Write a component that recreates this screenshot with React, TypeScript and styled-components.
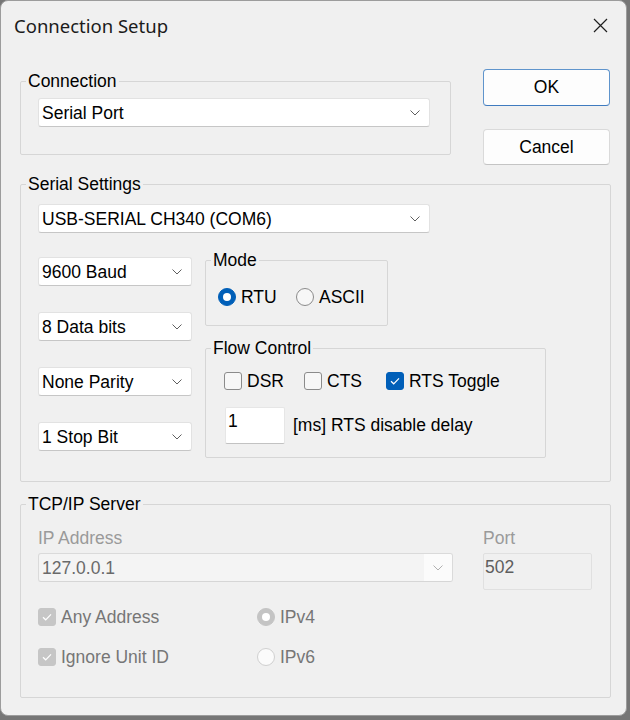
import React from "react";
import styled, { createGlobalStyle } from "styled-components";

const GlobalStyle = createGlobalStyle`
  html, body {
    margin: 0;
    padding: 0;
    background: #767676;
  }
  body {
    font-family: "Liberation Sans", Arial, sans-serif;
    font-size: 17.5px;
    color: #000;
  }
  * {
    box-sizing: border-box;
  }
`;

const Window = styled.div`
  width: 627px;
  height: 716px;
  background: #f0f0f0;
  border: 1px solid #9c9c9c;
  border-radius: 8px;
  overflow: hidden;
  display: flex;
  flex-direction: column;
`;

const TitleBar = styled.div`
  height: 49px;
  flex: none;
  display: flex;
  align-items: center;
  justify-content: space-between;
  padding: 0 18px 0 13px;
`;

const Title = styled.div`
  font-family: "Noto Sans", "Segoe UI", sans-serif;
  font-size: 18.5px;
  color: #1b1b1b;
`;

const CloseIcon = styled.svg`
  display: block;
`;

const Content = styled.div`
  padding: 21px 15px 0 19px;
  display: flex;
  flex-direction: column;
`;

const TopRow = styled.div`
  display: grid;
  grid-template-columns: 431px 127px;
  column-gap: 32px;
  align-items: start;
`;

const Group = styled.fieldset<{ $width?: number; $mt?: number }>`
  margin: ${p => p.$mt ?? 0}px 0 0 0;
  padding: 0;
  min-width: 0;
  border: 1px solid #d6d6d6;
  border-radius: 2px;
  ${p => (p.$width ? `width: ${p.$width}px;` : "")}
`;

const Legend = styled.legend`
  margin-left: 5px;
  padding: 0 2px;
  font-size: 17.5px;
  line-height: 20px;
`;

const GroupBody = styled.div<{ $pad: string }>`
  padding: ${p => p.$pad};
`;

const ButtonColumn = styled.div`
  display: flex;
  flex-direction: column;
  gap: 23px;
  margin-top: -2px;
`;

const DialogButton = styled.button<{ $default?: boolean }>`
  height: ${p => (p.$default ? 37 : 36)}px;
  width: 100%;
  font-family: "Liberation Sans", Arial, sans-serif;
  font-size: 17.5px;
  color: #000;
  background: #fdfdfd;
  border: 1px solid ${p => (p.$default ? "#5f94cc" : "#dadada")};
  border-bottom-color: ${p => (p.$default ? "#3f7bbf" : "#c4c4c4")};
  border-radius: 4px;
  padding: 0;
`;

const ComboBox = styled.div<{ $width: number; $disabled?: boolean }>`
  width: ${p => p.$width}px;
  height: 29px;
  flex: none;
  display: flex;
  align-items: center;
  overflow: hidden;
  background: ${p => (p.$disabled ? "#f4f4f4" : "#fff")};
  border: 1px solid ${p => (p.$disabled ? "#dadada" : "#e2e2e2")};
  border-bottom-color: ${p => (p.$disabled ? "#d6d6d6" : "#c6c6c6")};
  border-radius: 3px;
  color: ${p => (p.$disabled ? "#6a6a6a" : "#000")};
`;

const ComboText = styled.span`
  flex: 1;
  padding-left: 3px;
  line-height: 20px;
  white-space: nowrap;
`;

const ComboArrow = styled.span<{ $disabled?: boolean }>`
  width: 28px;
  align-self: stretch;
  display: flex;
  align-items: center;
  justify-content: center;
  background: ${p => (p.$disabled ? "#fbfbfb" : "transparent")};
`;

const SerialRow = styled.div`
  margin-top: 17px;
  display: grid;
  grid-template-columns: 154px 341px;
  column-gap: 13px;
  align-items: start;
`;

const ComboColumn = styled.div`
  padding-top: 7px;
  display: flex;
  flex-direction: column;
  gap: 26px;
`;

const GroupColumn = styled.div`
  display: flex;
  flex-direction: column;
  gap: 12px;
`;

const OptionRow = styled.div<{ $cols: string }>`
  display: grid;
  grid-template-columns: ${p => p.$cols};
  align-items: center;
`;

const Option = styled.label<{ $disabled?: boolean }>`
  display: inline-flex;
  align-items: center;
  gap: 5px;
  height: 20px;
  line-height: 20px;
  white-space: nowrap;
  color: ${p => (p.$disabled ? "#767676" : "#000")};
`;

const RadioCircle = styled.span<{ $checked?: boolean; $disabled?: boolean }>`
  width: 18px;
  height: 18px;
  flex: none;
  border-radius: 50%;
  display: flex;
  align-items: center;
  justify-content: center;
  background: ${p =>
    p.$checked ? (p.$disabled ? "#c4c4c4" : "#005fb8") : p.$disabled ? "#fbfbfb" : "#f7f7f7"};
  border: 1px solid
    ${p =>
      p.$checked ? (p.$disabled ? "#c4c4c4" : "#005fb8") : p.$disabled ? "#d0d0d0" : "#8b8b8b"};

  &::after {
    content: "";
    display: ${p => (p.$checked ? "block" : "none")};
    width: 8px;
    height: 8px;
    border-radius: 50%;
    background: #fff;
  }
`;

const CheckBox = styled.span<{ $checked?: boolean; $disabled?: boolean }>`
  width: 18px;
  height: 18px;
  flex: none;
  border-radius: 3px;
  display: flex;
  align-items: center;
  justify-content: center;
  background: ${p =>
    p.$checked ? (p.$disabled ? "#c6c6c6" : "#005fb8") : "#f7f7f7"};
  border: 1px solid
    ${p => (p.$checked ? (p.$disabled ? "#c6c6c6" : "#005fb8") : "#8b8b8b")};
`;

const DelayRow = styled.div`
  margin-top: 16px;
  display: flex;
  align-items: center;
  gap: 8px;
`;

const TextBox = styled.div<{ $width: number; $disabled?: boolean }>`
  width: ${p => p.$width}px;
  height: 37px;
  flex: none;
  padding: 3px ${p => (p.$disabled ? 1 : 2)}px 0;
  line-height: 20px;
  background: ${p => (p.$disabled ? "transparent" : "#fff")};
  border: 1px solid ${p => (p.$disabled ? "#e0e0e0" : "#e6e6e6")};
  border-bottom-color: ${p => (p.$disabled ? "#e0e0e0" : "#c2c2c2")};
  border-radius: 2px;
  color: ${p => (p.$disabled ? "#5e5e5e" : "#000")};
`;

const DelayField = styled.div`
  margin-left: 1px;
`;

const FieldGrid = styled.div`
  display: grid;
  grid-template-columns: 415px 109px;
  column-gap: 30px;
  row-gap: 5px;
  align-items: start;
`;

const FieldLabel = styled.div`
  line-height: 20px;
  color: #9a9a9a;
`;

const OptionsGrid = styled.div`
  margin-top: 17px;
  display: grid;
  grid-template-columns: 219px auto;
  row-gap: 20px;
`;

function Chevron({ color = "#5f5f5f" }: { color?: string }) {
  return (
    <svg width="10" height="6" viewBox="0 0 10 6">
      <path d="M0.5 0.5L5 5L9.5 0.5" fill="none" stroke={color} strokeWidth="1" />
    </svg>
  );
}

function Combo({ value, width, disabled }: { value: string; width: number; disabled?: boolean }) {
  return (
    <ComboBox $width={width} $disabled={disabled}>
      <ComboText>{value}</ComboText>
      <ComboArrow $disabled={disabled}>
        <Chevron color={disabled ? "#b0b0b0" : "#5f5f5f"} />
      </ComboArrow>
    </ComboBox>
  );
}

function Radio({ label, checked, disabled }: { label: string; checked?: boolean; disabled?: boolean }) {
  return (
    <Option $disabled={disabled}>
      <RadioCircle $checked={checked} $disabled={disabled} />
      {label}
    </Option>
  );
}

function Check({ label, checked, disabled }: { label: string; checked?: boolean; disabled?: boolean }) {
  return (
    <Option $disabled={disabled}>
      <CheckBox $checked={checked} $disabled={disabled}>
        {checked && (
          <svg width="10" height="8" viewBox="0 0 10 8">
            <path d="M1 4.2L3.7 6.8L9 1.3" fill="none" stroke="#fff" strokeWidth="1.2" />
          </svg>
        )}
      </CheckBox>
      {label}
    </Option>
  );
}

export default function App() {
  return (
    <>
      <GlobalStyle />
      <Window>
        <TitleBar>
          <Title>Connection Setup</Title>
          <CloseIcon width="15" height="15" viewBox="0 0 15 15">
            <path d="M1 1L14 14M14 1L1 14" stroke="#1f1f1f" strokeWidth="1.2" />
          </CloseIcon>
        </TitleBar>

        <Content>
          <TopRow>
            <Group>
              <Legend>Connection</Legend>
              <GroupBody $pad="7px 19px 27px 17px">
                <Combo value="Serial Port" width={392} />
              </GroupBody>
            </Group>
            <ButtonColumn>
              <DialogButton $default>OK</DialogButton>
              <DialogButton>Cancel</DialogButton>
            </ButtonColumn>
          </TopRow>

          <Group $mt={9}>
            <Legend>Serial Settings</Legend>
            <GroupBody $pad="10px 0 23px 17px">
              <Combo value="USB-SERIAL CH340 (COM6)" width={392} />
              <SerialRow>
                <ComboColumn>
                  <Combo value="9600 Baud" width={154} />
                  <Combo value="8 Data bits" width={154} />
                  <Combo value="None Parity" width={154} />
                  <Combo value="1 Stop Bit" width={154} />
                </ComboColumn>
                <GroupColumn>
                  <Group $width={183}>
                    <Legend>Mode</Legend>
                    <GroupBody $pad="17px 0 18px 12px">
                      <OptionRow $cols="78px auto">
                        <Radio label="RTU" checked />
                        <Radio label="ASCII" />
                      </OptionRow>
                    </GroupBody>
                  </Group>
                  <Group>
                    <Legend>Flow Control</Legend>
                    <GroupBody $pad="13px 0 13px 18px">
                      <OptionRow $cols="80px 82px auto">
                        <Check label="DSR" />
                        <Check label="CTS" />
                        <Check label="RTS Toggle" checked />
                      </OptionRow>
                      <DelayRow>
                        <DelayField>
                          <TextBox $width={60}>1</TextBox>
                        </DelayField>
                        <span>[ms] RTS disable delay</span>
                      </DelayRow>
                    </GroupBody>
                  </Group>
                </GroupColumn>
              </SerialRow>
            </GroupBody>
          </Group>

          <Group $mt={12}>
            <Legend>TCP/IP Server</Legend>
            <GroupBody $pad="14px 0 30px 17px">
              <FieldGrid>
                <FieldLabel>IP Address</FieldLabel>
                <FieldLabel>Port</FieldLabel>
                <Combo value="127.0.0.1" width={415} disabled />
                <TextBox $width={109} $disabled>
                  502
                </TextBox>
              </FieldGrid>
              <OptionsGrid>
                <Check label="Any Address" checked disabled />
                <Radio label="IPv4" checked disabled />
                <Check label="Ignore Unit ID" checked disabled />
                <Radio label="IPv6" disabled />
              </OptionsGrid>
            </GroupBody>
          </Group>
        </Content>
      </Window>
    </>
  );
}
